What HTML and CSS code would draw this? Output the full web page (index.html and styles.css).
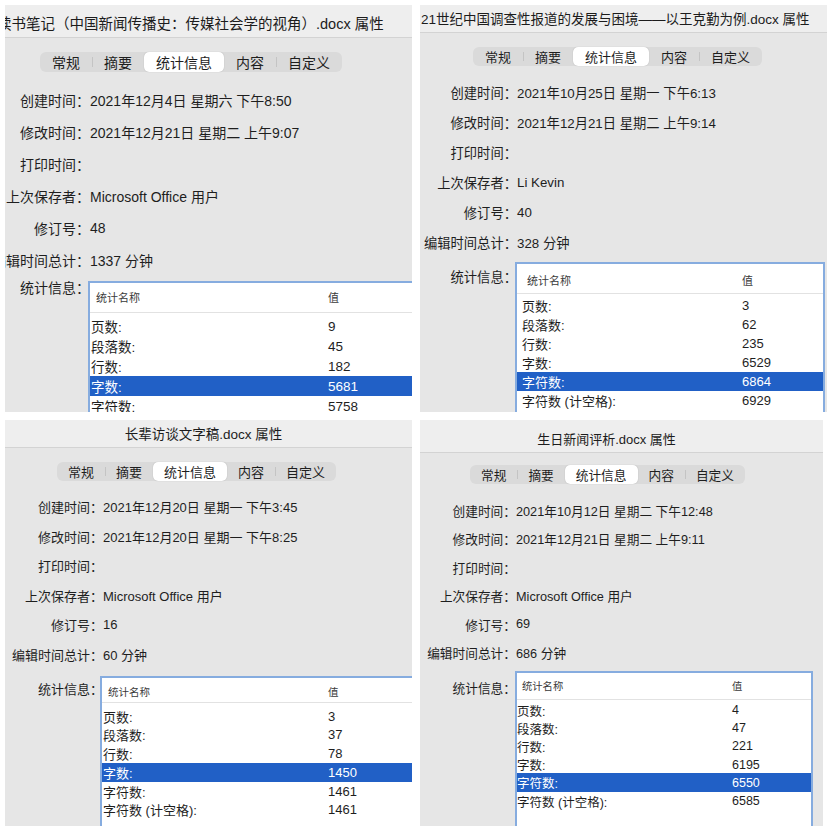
FILE: index.html
```html
<!DOCTYPE html>
<html lang="zh-CN">
<head>
    <meta charset="UTF-8">
    <meta name="viewport" content="width=device-width, initial-scale=1.0">
    <title>文档属性</title>
    <link rel="stylesheet" href="styles.css">
</head>
<body>
    <div class="sheet">

        <section class="dialog d1">
            <header class="title">读书笔记（中国新闻传播史：传媒社会学的视角）.docx 属性</header>
            <nav class="tabs">
                <span>常规</span><span class="div">摘要</span><span class="on">统计信息</span><span>内容</span><span class="div">自定义</span>
            </nav>
            <div class="info">
                <div class="row"><span class="key">创建时间：</span><span>2021年12月4日 星期六 下午8:50</span></div>
                <div class="row"><span class="key">修改时间：</span><span>2021年12月21日 星期二 上午9:07</span></div>
                <div class="row"><span class="key">打印时间：</span><span></span></div>
                <div class="row"><span class="key">上次保存者：</span><span>Microsoft Office 用户</span></div>
                <div class="row"><span class="key">修订号：</span><span>48</span></div>
                <div class="row"><span class="key">编辑时间总计：</span><span>1337 分钟</span></div>
                <div class="stats">
                    <span class="key">统计信息：</span>
                    <div class="list">
                        <div class="head"><span>统计名称</span><span>值</span></div>
                        <div class="items">
                            <div class="item"><span>页数:</span><span>9</span></div>
                            <div class="item"><span>段落数:</span><span>45</span></div>
                            <div class="item"><span>行数:</span><span>182</span></div>
                            <div class="item sel"><span>字数:</span><span>5681</span></div>
                            <div class="item"><span>字符数:</span><span>5758</span></div>
                        </div>
                    </div>
                </div>
            </div>
        </section>

        <section class="dialog d2">
            <header class="title">21世纪中国调查性报道的发展与困境——以王克勤为例.docx 属性</header>
            <nav class="tabs">
                <span>常规</span><span class="div">摘要</span><span class="on">统计信息</span><span>内容</span><span class="div">自定义</span>
            </nav>
            <div class="info">
                <div class="row"><span class="key">创建时间：</span><span>2021年10月25日 星期一 下午6:13</span></div>
                <div class="row"><span class="key">修改时间：</span><span>2021年12月21日 星期二 上午9:14</span></div>
                <div class="row"><span class="key">打印时间：</span><span></span></div>
                <div class="row"><span class="key">上次保存者：</span><span>Li Kevin</span></div>
                <div class="row"><span class="key">修订号：</span><span>40</span></div>
                <div class="row"><span class="key">编辑时间总计：</span><span>328 分钟</span></div>
                <div class="stats">
                    <span class="key">统计信息：</span>
                    <div class="list">
                        <div class="head"><span>统计名称</span><span>值</span></div>
                        <div class="items">
                            <div class="item"><span>页数:</span><span>3</span></div>
                            <div class="item"><span>段落数:</span><span>62</span></div>
                            <div class="item"><span>行数:</span><span>235</span></div>
                            <div class="item"><span>字数:</span><span>6529</span></div>
                            <div class="item sel"><span>字符数:</span><span>6864</span></div>
                            <div class="item"><span>字符数 (计空格):</span><span>6929</span></div>
                        </div>
                    </div>
                </div>
            </div>
        </section>

        <section class="dialog d3">
            <header class="title">长辈访谈文字稿.docx 属性</header>
            <nav class="tabs">
                <span>常规</span><span class="div">摘要</span><span class="on">统计信息</span><span>内容</span><span class="div">自定义</span>
            </nav>
            <div class="info">
                <div class="row"><span class="key">创建时间：</span><span>2021年12月20日 星期一 下午3:45</span></div>
                <div class="row"><span class="key">修改时间：</span><span>2021年12月20日 星期一 下午8:25</span></div>
                <div class="row"><span class="key">打印时间：</span><span></span></div>
                <div class="row"><span class="key">上次保存者：</span><span>Microsoft Office 用户</span></div>
                <div class="row"><span class="key">修订号：</span><span>16</span></div>
                <div class="row"><span class="key">编辑时间总计：</span><span>60 分钟</span></div>
                <div class="stats">
                    <span class="key">统计信息：</span>
                    <div class="list">
                        <div class="head"><span>统计名称</span><span>值</span></div>
                        <div class="items">
                            <div class="item"><span>页数:</span><span>3</span></div>
                            <div class="item"><span>段落数:</span><span>37</span></div>
                            <div class="item"><span>行数:</span><span>78</span></div>
                            <div class="item sel"><span>字数:</span><span>1450</span></div>
                            <div class="item"><span>字符数:</span><span>1461</span></div>
                            <div class="item"><span>字符数 (计空格):</span><span>1461</span></div>
                        </div>
                    </div>
                </div>
            </div>
        </section>

        <section class="dialog d4">
            <header class="title">生日新闻评析.docx 属性</header>
            <nav class="tabs">
                <span>常规</span><span class="div">摘要</span><span class="on">统计信息</span><span>内容</span><span class="div">自定义</span>
            </nav>
            <div class="info">
                <div class="row"><span class="key">创建时间：</span><span>2021年10月12日 星期二 下午12:48</span></div>
                <div class="row"><span class="key">修改时间：</span><span>2021年12月21日 星期二 上午9:11</span></div>
                <div class="row"><span class="key">打印时间：</span><span></span></div>
                <div class="row"><span class="key">上次保存者：</span><span>Microsoft Office 用户</span></div>
                <div class="row"><span class="key">修订号：</span><span>69</span></div>
                <div class="row"><span class="key">编辑时间总计：</span><span>686 分钟</span></div>
                <div class="stats">
                    <span class="key">统计信息：</span>
                    <div class="list">
                        <div class="head"><span>统计名称</span><span>值</span></div>
                        <div class="items">
                            <div class="item"><span>页数:</span><span>4</span></div>
                            <div class="item"><span>段落数:</span><span>47</span></div>
                            <div class="item"><span>行数:</span><span>221</span></div>
                            <div class="item"><span>字数:</span><span>6195</span></div>
                            <div class="item sel"><span>字符数:</span><span>6550</span></div>
                            <div class="item"><span>字符数 (计空格):</span><span>6585</span></div>
                        </div>
                    </div>
                </div>
            </div>
        </section>

    </div>
</body>
</html>
```

FILE: styles.css
```css
* {
    margin: 0;
    padding: 0;
    border: 0;
    box-sizing: border-box;
}

html,
body {
    width: 830px;
    height: 830px;
    overflow: hidden;
    background: #fff;
}

body {
    font-family: "Liberation Sans", "Noto Sans CJK SC", sans-serif;
    color: #1e1e1e;
}

.sheet {
    display: grid;
    grid-template-columns: 407px 407px;
    grid-template-rows: 407px 406px;
    gap: 8px;
    padding: 5px;
}

/* one properties window */
.dialog {
    display: flex;
    flex-direction: column;
    overflow: hidden;
    background: #e6e6e6;
    font-size: var(--fs);
}

.title {
    flex: none;
    height: var(--title-h);
    padding-top: var(--title-pt);
    background: #eeeeee;
    border-bottom: 1px solid #d3d3d3;
    font-size: var(--title-fs);
    line-height: 20px;
    white-space: nowrap;
    color: #1c1c1c;
}

.tabs {
    display: flex;
    align-self: flex-start;
    height: var(--tab-h);
    margin: var(--tab-top) 0 0 var(--tab-x);
    background: #dadada;
    border-radius: 6px;
    font-size: var(--tab-fs);
}

.tabs span {
    display: flex;
    align-items: center;
    padding: 0 var(--tab-pad);
    position: relative;
}

.tabs .div::before {
    content: "";
    position: absolute;
    left: 0;
    top: 25%;
    height: 50%;
    border-left: 1px solid #c4c4c4;
}

.tabs .on {
    background: #fff;
    border-radius: 5px;
    box-shadow: 0 0 1px rgba(0, 0, 0, 0.25);
}

.info {
    margin-top: var(--info-gap);
}

.row {
    display: flex;
    align-items: center;
    height: var(--row-h);
    white-space: nowrap;
}

.key {
    flex: none;
    display: flex;
    justify-content: flex-end;
    width: var(--key-w);
    white-space: nowrap;
}

/* statistics list */
.stats {
    display: flex;
    align-items: flex-start;
    margin-top: var(--tbl-gap);
}

.stats .key {
    align-items: center;
    height: var(--row-h);
    margin-top: var(--lbl-off);
}

.list {
    flex: none;
    width: var(--tbl-w);
    height: 220px;
    margin-left: var(--tbl-shift);
    background: #fff;
    border: 2px solid #86acdf;
    border-bottom: 0;
    font-size: var(--tbl-fs);
}

.head,
.item {
    display: grid;
    grid-template-columns: var(--name-w) 1fr;
    padding-left: var(--pad);
    white-space: nowrap;
}

.head {
    height: var(--head-h);
    padding-top: var(--head-pt);
    border-bottom: 1px solid #e2e2e2;
    font-size: var(--head-fs);
    line-height: 14px;
    color: #3a3a3a;
}

.head span:first-child {
    padding-left: 5px;
}

.items {
    padding-top: var(--items-pt);
}

.item {
    height: var(--item-h);
    align-items: center;
}

.item.sel {
    background: #2160c6;
    color: #fff;
}

/* per-window sizes, the four screenshots were scaled differently */
.d1 {
    --fs: 14px;
    --title-h: 33px;
    --title-pt: 9px;
    --title-fs: 14.5px;
    --tab-h: 21px;
    --tab-top: 14px;
    --tab-x: 35px;
    --tab-fs: 14px;
    --tab-pad: 12px;
    --info-gap: 12px;
    --row-h: 32px;
    --key-w: 85px;
    --tbl-gap: 5px;
    --lbl-off: -10px;
    --tbl-w: 340px;
    --tbl-shift: -2px;
    --tbl-fs: 13.5px;
    --pad: 1px;
    --name-w: 237px;
    --head-h: 30px;
    --head-pt: 8px;
    --head-fs: 11px;
    --items-pt: 3px;
    --item-h: 20px;
}

.d1 .title {
    text-indent: -8px;
}

.d2 {
    --fs: 13.3px;
    --title-h: 28px;
    --title-pt: 5px;
    --title-fs: 13.5px;
    --tab-h: 20px;
    --tab-top: 14px;
    --tab-x: 53px;
    --tab-fs: 13px;
    --tab-pad: 12px;
    --info-gap: 11px;
    --row-h: 30px;
    --key-w: 97px;
    --tbl-gap: 5px;
    --lbl-off: -1px;
    --tbl-w: 310px;
    --tbl-shift: -2px;
    --tbl-fs: 13px;
    --pad: 5px;
    --name-w: 220px;
    --head-h: 30px;
    --head-pt: 10px;
    --head-fs: 11px;
    --items-pt: 1.5px;
    --item-h: 19px;
}

.d2 .title {
    padding-left: 1px;
}

.d3 {
    --fs: 13px;
    --title-h: 28px;
    --title-pt: 5px;
    --title-fs: 13.5px;
    --tab-h: 20px;
    --tab-top: 14px;
    --tab-x: 52px;
    --tab-fs: 13px;
    --tab-pad: 11px;
    --info-gap: 11px;
    --row-h: 29.5px;
    --key-w: 98px;
    --tbl-gap: 7px;
    --lbl-off: -2px;
    --tbl-w: 320px;
    --tbl-shift: -3px;
    --tbl-fs: 13px;
    --pad: 1px;
    --name-w: 225px;
    --head-h: 25px;
    --head-pt: 7px;
    --head-fs: 10.5px;
    --items-pt: 3.5px;
    --item-h: 18.8px;
}

.d3 .title {
    text-align: center;
    padding-right: 10px;
}

.d4 {
    --fs: 12.7px;
    --title-h: 33px;
    --title-pt: 10px;
    --title-fs: 13px;
    --tab-h: 20px;
    --tab-top: 12px;
    --tab-x: 50px;
    --tab-fs: 12.7px;
    --tab-pad: 11px;
    --info-gap: 12px;
    --row-h: 28.5px;
    --key-w: 96px;
    --tbl-gap: 4px;
    --lbl-off: 2px;
    --tbl-w: 298px;
    --tbl-shift: -1px;
    --tbl-fs: 12.5px;
    --pad: 0px;
    --name-w: 215px;
    --head-h: 27px;
    --head-pt: 7px;
    --head-fs: 10.3px;
    --items-pt: 0.6px;
    --item-h: 18.2px;
    margin-right: 4px;
}

.d4 .title {
    text-align: center;
    padding-right: 30px;
}
```
